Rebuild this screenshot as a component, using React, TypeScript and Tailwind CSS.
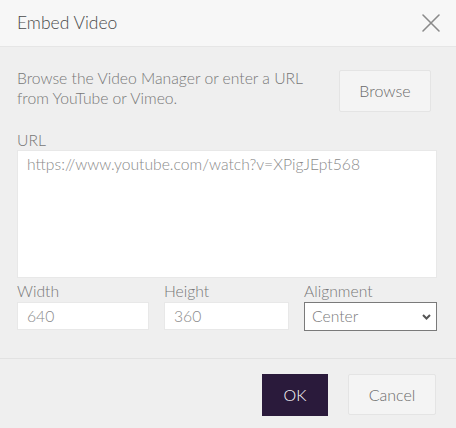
import { useState } from 'react'

export default function App() {
  const [url, setUrl] = useState('https://www.youtube.com/watch?v=XPigJEpt568')
  const [width, setWidth] = useState('640')
  const [height, setHeight] = useState('360')

  return (
    <div className="w-[456px] h-[428px] bg-[#efefef] font-['Lato','Liberation_Sans',sans-serif] font-light text-[#888] flex flex-col overflow-hidden">
      {/* Header */}
      <div className="h-[47px] bg-[#f7f7f7] border-b border-[#e6e6e6] flex items-center justify-between pl-[17px] pr-[14px]">
        <h1 className="text-[17.5px] text-[#4a4a4a] font-light leading-none pb-[1px]">Embed Video</h1>
        <button className="w-[20px] h-[20px] flex items-center justify-center mr-[1px]">
          <svg width="20" height="20" viewBox="0 0 20 20" fill="none" stroke="#8a8a8a" strokeWidth="1.6" strokeLinecap="round">
            <path d="M2 2 L18 18 M18 2 L2 18" />
          </svg>
        </button>
      </div>

      {/* Body */}
      <div className="flex-1 pl-[17px] pr-[19px] pt-[21px]">
        <div className="flex justify-between items-start">
          <p className="text-[15.7px] leading-[20px] text-[#777]">
            Browse the Video Manager or enter a URL
            <br />
            from YouTube or Vimeo.
          </p>
          <button className="mt-[2px] mr-[6px] w-[92px] h-[42px] bg-[#f4f4f4] border border-[#e4e4e4] rounded-[2px] text-[16px] text-[#6a6a6a]">
            Browse
          </button>
        </div>

        <label className="block mt-[18px] text-[15.7px] leading-[20px] text-[#777]">URL</label>
        <textarea
          value={url}
          onChange={e => setUrl(e.target.value)}
          className="block w-full h-[128px] bg-white border border-[#e8e8e8] px-[9px] py-[3px] text-[15.7px] leading-[20px] text-[#8a8a8a] font-light resize-none outline-none"
        />

        <div className="grid grid-cols-[132px_125px_133px] gap-x-[15px] mt-[3px]">
          <div>
            <label className="block text-[15.7px] leading-[20px] text-[#777]">Width</label>
            <input
              value={width}
              onChange={e => setWidth(e.target.value)}
              className="block mt-[1px] w-full h-[28px] bg-white border border-[#e8e8e8] px-[9px] text-[15.7px] text-[#8a8a8a] font-light outline-none"
            />
          </div>
          <div>
            <label className="block text-[15.7px] leading-[20px] text-[#777]">Height</label>
            <input
              value={height}
              onChange={e => setHeight(e.target.value)}
              className="block mt-[1px] w-full h-[28px] bg-white border border-[#e8e8e8] px-[9px] text-[15.7px] text-[#8a8a8a] font-light outline-none"
            />
          </div>
          <div>
            <label className="block text-[15.7px] leading-[20px] text-[#777]">Alignment</label>
            <div className="relative mt-[1px]">
              <select className="block w-full h-[29px] appearance-none bg-white border border-[#7a7a7a] pl-[7px] text-[15.7px] text-[#7a7a7a] font-light outline-none">
                <option>Center</option>
                <option>Left</option>
                <option>Right</option>
              </select>
              <svg className="absolute right-[6px] top-[12px] pointer-events-none" width="9" height="6" viewBox="0 0 9 6" fill="none" stroke="#555" strokeWidth="2">
                <path d="M1 1 L4.5 4.5 L8 1" />
              </svg>
            </div>
          </div>
        </div>
      </div>

      {/* Footer */}
      <div className="h-[70px] border-t border-[#e2e2e2] flex justify-end items-start gap-[20px] pt-[15px] pr-[20px]">
        <button className="w-[66px] h-[42px] bg-[#2a1a3b] text-white text-[16px] font-light">OK</button>
        <button className="w-[88px] h-[41px] bg-[#f4f4f4] border border-[#e4e4e4] rounded-[2px] text-[16px] text-[#6a6a6a]">
          Cancel
        </button>
      </div>
    </div>
  )
}
